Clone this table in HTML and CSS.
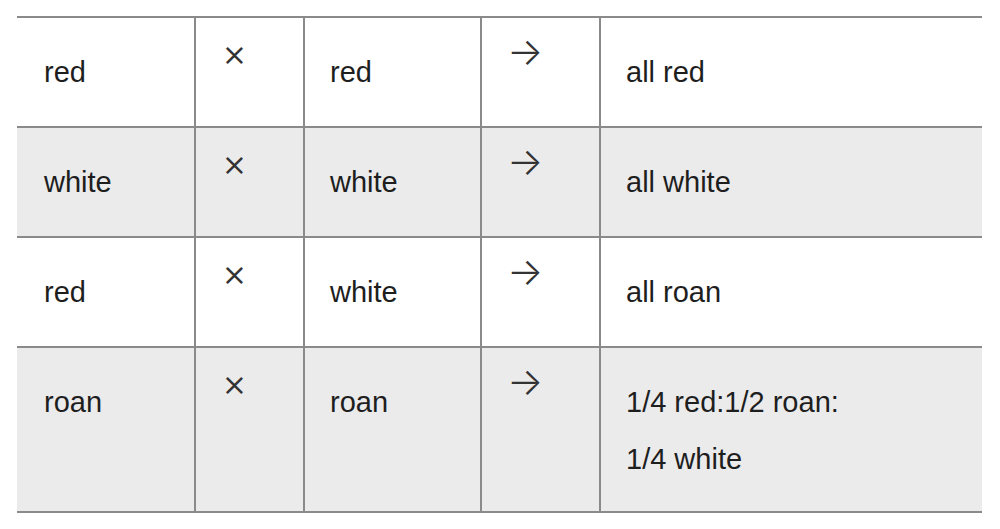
FILE: index.html
```html
<!DOCTYPE html>
<html>
<head>
<meta charset="utf-8">
<link rel="stylesheet" href="styles.css">
</head>
<body>
<div class="wrap">
<table class="cross">
<colgroup>
<col class="c1"><col class="c2"><col class="c3"><col class="c4"><col class="c5">
</colgroup>
<tbody>
<tr><td class="txt">red</td><td class="sym times">×</td><td class="txt">red</td><td class="sym arrow">→</td><td class="txt">all red</td></tr>
<tr class="alt"><td class="txt">white</td><td class="sym times">×</td><td class="txt">white</td><td class="sym arrow">→</td><td class="txt">all white</td></tr>
<tr><td class="txt">red</td><td class="sym times">×</td><td class="txt">white</td><td class="sym arrow">→</td><td class="txt">all roan</td></tr>
<tr class="alt last"><td class="txt">roan</td><td class="sym times">×</td><td class="txt">roan</td><td class="sym arrow">→</td><td class="txt">1/4 red:1/2 roan:<br>1/4 white</td></tr>
</tbody>
</table>
</div>
</body>
</html>
```
FILE: styles.css
```css
html, body {
  margin: 0;
  padding: 0;
  background: #ffffff;
}
.wrap {
  padding: 16px 18px 0 17px;
}
.cross {
  width: 965px;
  table-layout: fixed;
  border-collapse: collapse;
  font-family: "Liberation Sans", Arial, sans-serif;
  font-size: 29px;
  color: #1e1e1e;
}
.c1 { width: 178px; }
.c2 { width: 109px; }
.c3 { width: 177px; }
.c4 { width: 119px; }
.c5 { width: 382px; }
.cross td {
  border-top: 2px solid #8a8a8a;
  border-bottom: 2px solid #8a8a8a;
  border-left: 2px solid #8a8a8a;
  vertical-align: top;
}
.cross td:first-child {
  border-left: none;
}
.cross .txt {
  padding: 26px 20px 25px 25px;
  line-height: 57px;
}
.cross td.txt:first-child {
  padding-left: 27px;
}
.cross .last .txt {
  padding-bottom: 23px;
}
.cross .sym {
  padding: 0 8px 0 0;
  font-family: Inter, "Liberation Sans", sans-serif;
  font-weight: 300;
  color: #333333;
}
.cross .times {
  padding-top: 14px;
  padding-left: 26px;
  font-size: 38px;
  line-height: 40px;
}
.cross .arrow {
  padding-top: 14px;
  padding-left: 25px;
  font-size: 38px;
  line-height: 38px;
}
.alt td {
  background: #ebebeb;
}
```
